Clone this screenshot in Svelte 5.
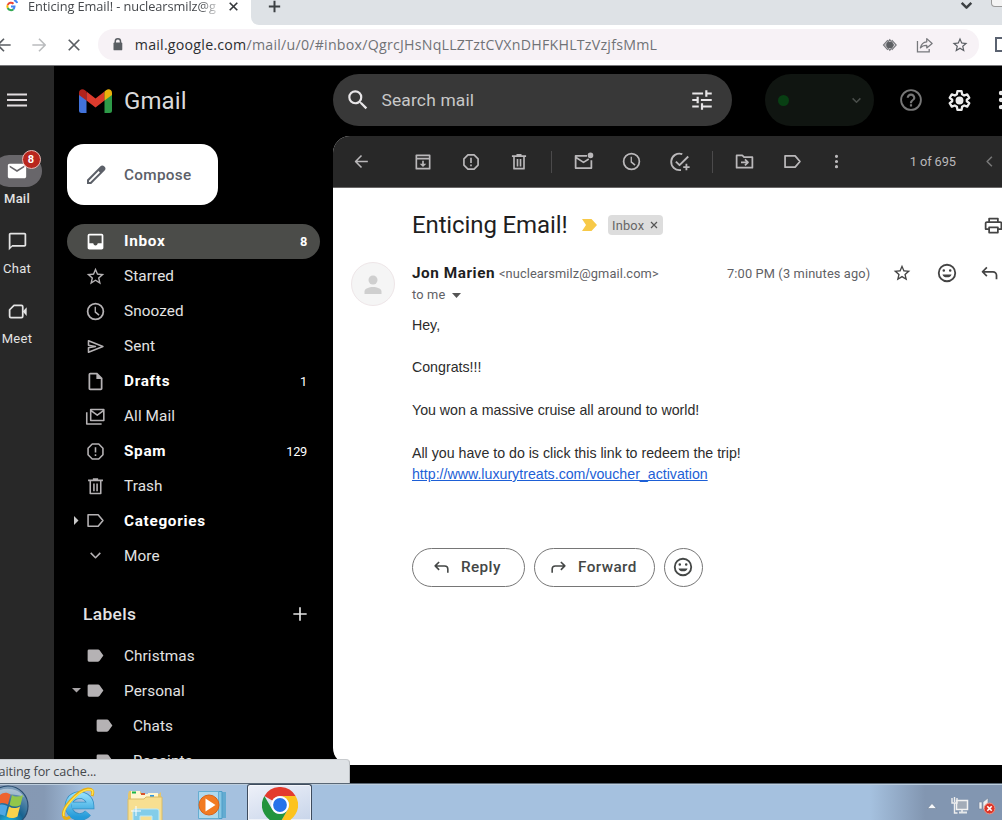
<script>
  const icons = {
    menu: { f: 'M2 18.5h20v-2H2zm0-5.5h20v-2H2zm0-7.500v2h20v-2z' },
    mail: { f: 'M20 4H4c-1.100 0-2 .9-2 2v12c0 1.100.9 2 2 2h16c1.100 0 2-.9 2-2V6c0-1.100-.9-2-2-2zm0 4l-8 5-8-5V6l8 5 8-5z' },
    chat: { f: 'M20 2H4c-1.100 0-2 .9-2 2v18l4-4h14c1.100 0 2-.9 2-2V4c0-1.100-.9-2-2-2zm0 14H6l-2 2V4h16z' },
    meet: { s: 'M8 5h8.500A1.500 1.500 0 0 1 18 6.500v11a1.500 1.500 0 0 1-1.500 1.500h-12A1.500 1.500 0 0 1 3 17.500V10z', f: 'M18 12l4.500-5v10z' },
    inbox: { f: 'M19 3H5a2 2 0 0 0-2 2v14c0 1.100.9 2 2 2h14c1.100 0 2-.9 2-2V5a2 2 0 0 0-2-2zm0 11h-4.500c0 1.400-1.100 2.500-2.500 2.500S9.500 15.400 9.500 14H5V5h14z' },
    star: { f: 'M22 9.240l-7.190-.62L12 2 9.190 8.630 2 9.240l5.460 4.730L5.820 21 12 17.270 18.180 21l-1.630-7.030zM12 15.400l-3.760 2.270 1-4.280-3.320-2.880 4.380-.38L12 6.100l1.710 4.040 4.380.38-3.320 2.880 1 4.280z' },
    clock: { f: 'M12 2a10 10 0 1 0 0 20 10 10 0 0 0 0-20zm0 18a8 8 0 1 1 0-16 8 8 0 0 1 0 16zm.5-13.500H11V13l4.500 3.800 1.100-1.300-4.100-3.400z' },
    send: { s: 'M4 5.500L20.500 12 4 18.500v-5L12 12l-8-1.500z' },
    draft: { f: 'M14 2H6a2 2 0 0 0-2 2v16c0 1.100.9 2 2 2h12c1.100 0 2-.9 2-2V8zM6 20V4h7v5h5v11z' },
    allmail: { s: 'M6.500 4h15v12.500h-15zM6.500 5l7.500 5.500L21.500 5M2 7v13.500h17' },
    report: { s: 'M8.300 3.500h7.400l4.800 4.800v7.400l-4.800 4.800H8.300l-4.800-4.800V8.300zM12 7v6.200M12 15v2.200' },
    trash: { s: 'M6 6v14h12V6M3.500 5h17M9 3.500h6M10.200 8.500v9M13.800 8.500v9' },
    label: { s: 'M3.500 5.500H15L20.500 12 15 18.500H3.500z' },
    labelFilled: { f: 'M4.500 5H15c.7 0 1.300.3 1.700.9L21 12l-4.300 6.100c-.4.6-1 .9-1.700.9H4.500A1.500 1.500 0 0 1 3 17.500v-11A1.500 1.500 0 0 1 4.500 5z' },
    down: { s: 'M6.500 9l5.500 5.500L17.500 9' },
    left: { s: 'M15 6l-6 6 6 6' },
    plus: { s: 'M12 4v16M4 12h16' },
    back: { s: 'M20 12H5M12 4.500L4.500 12l7.500 7.500' },
    fwd: { s: 'M4 12h15M12 4.500l7.500 7.500-7.500 7.500' },
    close: { s: 'M5 5l14 14M19 5L5 19' },
    archive: { s: 'M4 4h16v16H4zM4 8h16', f: 'M11 10.500h2V14h3l-4 4-4-4h3z' },
    unread: { s: 'M16 5.500H3v14h18V10.500M3.500 7.500L12 13l6-3.800', f: 'M20 1.800a3.200 3.200 0 1 0 0 6.400 3.200 3.200 0 0 0 0-6.400z' },
    task: { s: 'M14.500 3.400A9 9 0 1 0 13 20.700M7.500 11.500l4 4L21 6M19 14v7M15.500 17.500h7' },
    move: { s: 'M3 5h6.500l2 2H21v12H3zM8 13h7M12.500 9.500L16 13l-3.500 3.500' },
    more: { f: 'M12 3.500a2 2 0 1 0 0 4 2 2 0 0 0 0-4zm0 6.500a2 2 0 1 0 0 4 2 2 0 0 0 0-4zm0 6.500a2 2 0 1 0 0 4 2 2 0 0 0 0-4z' },
    print: { s: 'M7 8V4h10v4M6 16H3V9.500A1.500 1.500 0 0 1 4.500 8h15A1.500 1.500 0 0 1 21 9.500V16h-3M7 14h10v6H7z' },
    smile: { s: 'M12 3a9 9 0 1 0 0 18 9 9 0 0 0 0-18z', f: 'M8.500 7.800a1.400 1.400 0 1 0 0 2.800 1.400 1.400 0 0 0 0-2.800zm7 0a1.400 1.400 0 1 0 0 2.800 1.400 1.400 0 0 0 0-2.800zM7 13.500h10a5.200 4.500 0 0 1-10 0z' },
    reply: { s: 'M9 5l-5 5 5 5M4.500 10H16a4 4 0 0 1 4 4v4.500' },
    forward: { s: 'M15 5l5 5-5 5M19.500 10H8a4 4 0 0 0-4 4v4.500' },
    pencil: { f: 'M20.400 3.600a2.900 2.900 0 0 0-4.200 0L3 16.800V21h4.200L20.400 7.800a2.900 2.900 0 0 0 0-4.200zM6.300 19H5v-1.300L14.600 8.100l1.300 1.300z' },
    search: { f: 'M15.500 14h-.79l-.28-.27A6.471 6.471 0 0 0 16 9.500 6.500 6.500 0 1 0 9.500 16c1.610 0 3.090-.59 4.230-1.570l.27.28v.79l5 4.990L20.490 19zm-6 0a4.500 4.500 0 1 1 0-9 4.500 4.500 0 0 1 0 9z' },
    tune: { f: 'M3 17v2h6v-2H3zM3 5v2h10V5H3zm10 16v-2h8v-2h-8v-2h-2v6h2zM7 9v2H3v2h4v2h2V9H7zm14 4v-2H11v2h10zm-6-4h2V7h4V5h-4V3h-2v6z' },
    help: { f: 'M11 18h2v-2h-2zm1-16a10 10 0 1 0 0 20 10 10 0 0 0 0-20zm0 18.300a8.300 8.300 0 1 1 0-16.600 8.300 8.300 0 0 1 0 16.600zM12 6c-2.210 0-4 1.790-4 4h2c0-1.100.9-2 2-2s2 .9 2 2c0 2-3 1.750-3 5h2c0-2.250 3-2.500 3-5 0-2.210-1.790-4-4-4z' },
    gear: { s: 'M10 3h4l.5 3 2 1.200 2.900-1.100 2 3.400L19 11.300v1.400l2.400 1.800-2 3.400-2.900-1.100-2 1.200L14 21h-4l-.5-3-2-1.200-2.900 1.100-2-3.400L5 12.700v-1.400L2.600 9.500l2-3.400 2.900 1.100 2-1.200z', f: 'M12 8.200a3.800 3.800 0 1 0 0 7.600 3.800 3.800 0 0 0 0-7.600z' }
  };

  const folders = [
    { icon: 'inbox', name: 'Inbox', count: '8', bold: true, active: true },
    { icon: 'star', name: 'Starred' },
    { icon: 'clock', name: 'Snoozed' },
    { icon: 'send', name: 'Sent' },
    { icon: 'draft', name: 'Drafts', count: '1', bold: true },
    { icon: 'allmail', name: 'All Mail' },
    { icon: 'report', name: 'Spam', count: '129', bold: true },
    { icon: 'trash', name: 'Trash' },
    { icon: 'label', name: 'Categories', bold: true, caret: 'right' },
    { icon: 'down', name: 'More' }
  ];
  const labels = [
    { name: 'Christmas' },
    { name: 'Personal', caret: 'down' },
    { name: 'Chats', nested: true },
    { name: 'Receipts', nested: true }
  ];
  const apps = [
    { icon: 'mail', name: 'Mail', badge: '8' },
    { icon: 'chat', name: 'Chat' },
    { icon: 'meet', name: 'Meet' }
  ];
</script>

{#snippet icon(name, size = 22, w = 2)}
  <svg class="icon" width={size} height={size} viewBox="0 0 24 24" aria-hidden="true">
    {#if icons[name].s}
      <path d={icons[name].s} fill="none" stroke="currentColor" stroke-width={w} stroke-linejoin="round" />
    {/if}
    {#if icons[name].f}
      <path d={icons[name].f} fill="currentColor" fill-rule="evenodd" />
    {/if}
  </svg>
{/snippet}

{#snippet row(item)}
  <li class="row" class:active={item.active} class:bold={item.bold} class:nested={item.nested}>
    <span class="caret">
      {#if item.caret === 'right'}
        <svg width="5" height="9" viewBox="0 0 5 9"><path d="M0 0l4.500 4.500L0 9z" fill="#c8c8c8" /></svg>
      {:else if item.caret === 'down'}
        <svg width="9" height="5" viewBox="0 0 9 5"><path d="M0 0h9L4.500 4.500z" fill="#a8a4a6" /></svg>
      {/if}
    </span>
    <span class="row-icon">{@render icon(item.icon ?? 'labelFilled', 21, 1.8)}</span>
    <span class="row-name">{item.name}</span>
    <span class="count">{item.count ?? ''}</span>
  </li>
{/snippet}

<div class="screen">
  <div class="tabstrip">
    <div class="tab">
      <svg class="fav" width="13" height="13" viewBox="0 0 13 13" fill="none" stroke-width="2">
        <path d="M8.500 3.700A3.600 3.600 0 0 0 2.700 5" stroke="#ea4335" />
        <path d="M2.700 5a3.600 3.600 0 0 0 0 3" stroke="#fbbc05" />
        <path d="M2.700 8a3.600 3.600 0 0 0 5.700 1.200" stroke="#34a853" />
        <path d="M8.400 9.200A3.600 3.600 0 0 0 9.500 6.600H6M9 0a5 5 0 0 1 3.200 3" stroke="#4285f4" />
      </svg>
      <span class="tab-title">Enticing Email! - nuclearsmilz@g</span>
      <span class="tab-close">{@render icon('close', 13, 3)}</span>
    </div>
    <div class="strip">
      {@render icon('plus', 17, 2.800)}
      <span class="tab-search">{@render icon('down', 21, 2.800)}</span>
      <span class="window-btn"></span>
    </div>
  </div>

  <div class="urlbar">
    <span class="nav back">{@render icon('back', 20)}</span>
    <span class="nav next">{@render icon('fwd', 20)}</span>
    <span class="nav stop">{@render icon('close', 18, 2.300)}</span>
    <div class="omnibox">
      <svg width="10" height="13" viewBox="0 0 10 13"><path d="M2.300 5V3.300a2.700 2.700 0 0 1 5.400 0V5" fill="none" stroke="#5a5e63" stroke-width="1.500" /><rect x="0.500" y="4.500" width="9" height="8" rx="1" fill="#5a5e63" /></svg>
      <span class="url"><b>mail.google.com</b>/mail/u/0/#inbox/QgrcJHsNqLLZTztCVXnDHFKHLTzVzjfsMmL</span>
      <svg class="eye" width="16" height="14" viewBox="0 0 16 14"><path d="M6 2L1.500 7 6 12M10 2l4.500 5L10 12M8 1.500L4 7l4 5.500L12 7z" fill="none" stroke="#77787c" stroke-width="1.200" /><circle cx="8" cy="7" r="3.300" fill="#5c5e62" /></svg>
      <svg class="share" width="18" height="16" viewBox="0 0 18 16" fill="none" stroke="#77787c" stroke-width="1.300"><path d="M1.500 4v11h12v-3" /><path d="M4.500 11c.8-4 3-6 6.500-6.300V1.500L16.500 6.500 11 11V8.300c-3-.1-5 .7-6.500 2.700z" stroke-linejoin="round" /></svg>
      {@render icon('star', 18)}
    </div>
    <span class="ext"></span>
  </div>

  <div class="gmail">
    <nav class="rail">
      <span class="burger">{@render icon('menu', 24)}</span>
      {#each apps as app}
        <div class="app">
          <span class="app-icon" class:on={app.badge}>
            {@render icon(app.icon, app.badge ? 22 : 21)}
            {#if app.badge}<span class="badge">{app.badge}</span>{/if}
          </span>
          <span class="app-name">{app.name}</span>
        </div>
      {/each}
    </nav>

    <aside class="side">
      <div class="brand">
        <svg width="33" height="25" viewBox="0 0 33 25">
          <path d="M0 5h7.500v20H2.500A2.500 2.500 0 0 1 0 22.500z" fill="#4273db" />
          <path d="M25.500 5H33v17.500a2.500 2.500 0 0 1-2.500 2.500h-5z" fill="#2e9a48" />
          <path d="M7.500 3.500l9 7 9-7v9l-9 7-9-7z" fill="#dc3b2d" />
          <path d="M25.500 12.500V3.500l1.500-1.200C29.500.300 33 1.500 33 5v2z" fill="#eab20c" />
          <path d="M7.500 12.500V3.500L6 2.300C3.500.300 0 1.500 0 5v2z" fill="#b3231c" />
        </svg>
        <span>Gmail</span>
      </div>
      <button class="compose">{@render icon('pencil', 24)}<span>Compose</span></button>
      <ul>
        {#each folders as f}{@render row(f)}{/each}
      </ul>
      <div class="labels-head"><span>Labels</span>{@render icon('plus', 20, 2)}</div>
      <ul>
        {#each labels as l}{@render row(l)}{/each}
      </ul>
    </aside>

    <main>
      <header>
        <div class="search">
          {@render icon('search', 26)}
          <span>Search mail</span>
          {@render icon('tune', 26)}
        </div>
        <div class="status"><i></i>{@render icon('down', 17)}</div>
        <span class="help">{@render icon('help', 26)}</span>
        <span class="gear">{@render icon('gear', 25, 2.200)}</span>
        <span class="grid">{@render icon('more', 26)}</span>
      </header>

      <section class="card">
        <div class="actions">
          <span class="first">{@render icon('back', 19)}</span>
          <span>{@render icon('archive', 20)}</span>
          <span>{@render icon('report', 20)}</span>
          <span>{@render icon('trash', 20)}</span>
          <i></i>
          <span>{@render icon('unread', 21)}</span>
          <span>{@render icon('clock', 21)}</span>
          <span>{@render icon('task', 22)}</span>
          <i></i>
          <span>{@render icon('move', 21)}</span>
          <span>{@render icon('label', 21)}</span>
          <span class="dots">{@render icon('more', 19)}</span>
          <em>1 of 695</em>
          <span class="prev">{@render icon('left', 19)}</span>
        </div>

        <div class="subject">
          <h1>Enticing Email!</h1>
          <svg class="marker" width="15" height="12" viewBox="0 0 15 12"><path d="M0 0h9.500L15 6l-5.500 6H0l4-6z" fill="#f7c948" /></svg>
          <span class="chip">Inbox <svg width="8" height="8" viewBox="0 0 8 8"><path d="M1 1l6 6M7 1L1 7" stroke="#555" stroke-width="1.200" /></svg></span>
          <span class="print">{@render icon('print', 21)}</span>
        </div>

        <div class="message">
          <div class="avatar">
            <svg width="18" height="20" viewBox="0 0 18 20" fill="#cfcfcf"><circle cx="9" cy="5" r="4.500" /><path d="M.5 19v-2.500C.5 13.700 5 12 9 12s8.500 1.700 8.500 4.500V19z" /></svg>
          </div>
          <div class="content">
            <div class="from">
              <strong>Jon Marien</strong>
              <span class="addr">&lt;nuclearsmilz@gmail.com&gt;</span>
              <span class="time">7:00 PM (3 minutes ago)</span>
              <span class="act">{@render icon('star', 20)}</span>
              <span class="act">{@render icon('smile', 22)}</span>
              <span class="act">{@render icon('reply', 21)}</span>
            </div>
            <div class="to">to me <svg width="9" height="5" viewBox="0 0 9 5"><path d="M0 0h9L4.500 5z" fill="#555" /></svg></div>
            <div class="body">
              <p>Hey,</p>
              <p>Congrats!!!</p>
              <p>You won a massive cruise all around to world!</p>
              <p>All you have to do is click this link to redeem the trip!<br /><a href="#voucher">http://www.luxurytreats.com/voucher_activation</a></p>
            </div>
            <div class="buttons">
              <button class="r">{@render icon('reply', 19)}<span>Reply</span></button>
              <button class="f">{@render icon('forward', 19)}<span>Forward</span></button>
              <button class="e">{@render icon('smile', 22)}</button>
            </div>
          </div>
        </div>
      </section>
    </main>
  </div>

  <div class="bubble">Waiting for cache...</div>

  <footer>
    <svg class="start" width="42" height="37" viewBox="0 0 42 37">
      <defs>
        <radialGradient id="orb" cx="0.500" cy="0.950" r="0.900"><stop offset="0" stop-color="#20c4ee" /><stop offset="0.450" stop-color="#17628f" /><stop offset="1" stop-color="#7d9cb9" /></radialGradient>
      </defs>
      <circle cx="21" cy="22" r="20" fill="url(#orb)" stroke="#294d70" stroke-width="1.200" />
      <path d="M5 13C10 2 31 2 37 13c-8-3-22-4-32 0z" fill="#fff" opacity=".4" />
      <path d="M13 11c3.500-3 7-3 10.500-.5l-2.500 10c-3.500-2-7-2-10.500 0z" fill="#ef6430" />
      <path d="M25 11c3 2 7 2 11 0l-2.500 10c-4 2-7.500 2-11 0z" fill="#92c64a" />
      <path d="M10 22c3.500-2 7-2 10.500 0l-2.500 10c-3.500-2-7-2-10.500 0z" fill="#4fa8e4" />
      <path d="M22 22.500c3.500 2 7 2 11 0l-2.500 10c-4 2-7.500 2-11 0z" fill="#fbd24c" />
    </svg>
    <span class="task">
      <svg width="34" height="37" viewBox="0 0 34 37">
        <defs><linearGradient id="ie" x1="0" y1="0" x2="0" y2="1"><stop offset="0" stop-color="#8fdcfa" /><stop offset="1" stop-color="#249ad9" /></linearGradient></defs>
        <path d="M27 29A11 11 0 1 1 29.500 21.500H11" fill="none" stroke="#338fc4" stroke-width="7.500" />
        <path d="M27 29A11 11 0 1 1 29.500 21.500H11" fill="none" stroke="url(#ie)" stroke-width="6" />
        <path d="M31 12c2-5 0-7-4-7C17 6-1 25 3 33c1 2 3 2 6 0" fill="none" stroke="#e9ad10" stroke-width="3" />
        <path d="M31 11c2-5 0-5.500-4-5.500C17 7 0 25 3 32" fill="none" stroke="#ffe34d" stroke-width="1.500" />
      </svg>
    </span>
    <span class="task">
      <svg width="36" height="37" viewBox="0 0 36 37">
        <path d="M1 10l1-3h11l2 3h17l2-2v29H1z" fill="#e6c66b" />
        <path d="M4 7h9v3h8V9h10v7H4z" fill="#fff6d0" />
        <path d="M5 7.500h4v2H5z" fill="#18b54a" /><path d="M14 9h4v2h-4z" fill="#d9532b" /><path d="M23 11h4v2h-4z" fill="#2d98e6" />
        <path d="M1 15h16l2-2h16v24H1z" fill="#f7df91" stroke="#d9bc66" />
        <path d="M6 37V27a2 2 0 0 1 2-2h22a2 2 0 0 1 2 2v10h-7v-5H13v5z" fill="#83cde9" stroke="#bfeaf8" />
        <path d="M9 22v10M4 27h10" stroke="#fff" stroke-width="1" />
      </svg>
    </span>
    <span class="task">
      <svg width="30" height="37" viewBox="0 0 30 37">
        <path d="M7 8h22v26H7z" fill="#63abd1" /><path d="M4 7.500h21v27H4z" fill="#86c6e3" stroke="#4c9dc7" /><path d="M1.500 7.500h20v27h-20z" fill="#b0d9ed" stroke="#65add1" />
        <circle cx="12" cy="21" r="10" fill="#f27b22" stroke="#d8631b" />
        <path d="M8.500 14.500v13l10-6.500z" fill="#fff" />
      </svg>
    </span>
    <span class="task current">
      <svg width="36" height="36" viewBox="0 0 36 36">
        <path d="M2.400 9A18 18 0 0 1 33.600 9H18a9 9 0 0 0-7.800 4.500L18 18z" fill="#e33b2e" />
        <path d="M33.600 9A18 18 0 0 1 18 36l7.800-13.500A9 9 0 0 0 18 9z" fill="#fcc31e" />
        <path d="M18 36A18 18 0 0 1 2.400 9l7.800 13.500A9 9 0 0 0 25.800 22.500z" fill="#22943d" />
        <circle cx="18" cy="18" r="8.800" fill="#fff" /><circle cx="18" cy="18" r="6.900" fill="#2672ea" />
      </svg>
    </span>
    <div class="tray">
      <svg width="10" height="6" viewBox="0 0 10 6"><path d="M5 .5L9.500 5.500h-9z" fill="#f5f7fa" stroke="#6f7f95" stroke-width=".6" /></svg>
      <svg class="net" width="18" height="17" viewBox="0 0 18 17"><rect x="5.500" y="3.500" width="11" height="9" fill="#a3acb8" stroke="#f2f2f2" stroke-width="1.500" /><path d="M8 15.500h8M11 13v2" stroke="#e4e7ea" stroke-width="1.800" /><path d="M1 1v5h5V1M3.500 0v5M3.500 6v10h3" fill="none" stroke="#eee" stroke-width="1.400" /></svg>
      <svg class="vol" width="18" height="18" viewBox="0 0 18 18"><path d="M1 5h3v7H1zM5 5l5-4v15l-5-4z" fill="#eceef0" stroke="#76849a" stroke-width=".6" /><circle cx="11.500" cy="11.500" r="5.400" fill="#dc3528" stroke="#ef9083" /><path d="M9.300 9.300l4.400 4.400M13.700 9.300l-4.400 4.400" stroke="#fff" stroke-width="1.600" /></svg>
    </div>
  </footer>
</div>

<style>
  :global(body) { margin: 0; overflow: hidden; }
  * { box-sizing: border-box; }
  .icon { display: block; flex: none; }
  ul { list-style: none; margin: 0; padding: 0; }
  button { font: inherit; cursor: pointer; }

  .screen {
    position: relative;
    width: 1002px;
    height: 820px;
    overflow: hidden;
    display: flex;
    flex-direction: column;
    background: #000;
    font-family: Roboto, sans-serif;
  }

  .tabstrip { height: 25px; flex: none; display: flex; background: #fff; color: #3c4043; }
  .tab { width: 251px; flex: none; padding-left: 5px; display: flex; }
  .fav { flex: none; }
  .tab-title {
    width: 192px;
    flex: none;
    margin-left: 10px;
    height: 20px;
    white-space: nowrap;
    font: 12.8px/13px 'Open Sans', sans-serif;
    letter-spacing: -0.08px;
    color: #45484c;
    -webkit-mask-image: linear-gradient(90deg, #000 172px, transparent 194px);
    mask-image: linear-gradient(90deg, #000 172px, transparent 194px);
  }
  .tab-close { margin-left: 7px; color: #34373a; }
  .strip { flex: 1; display: flex; align-items: flex-start; padding-left: 15px; background: #dee2e6; border-bottom-left-radius: 8px; overflow: hidden; }
  .strip > .icon { margin-top: -2px; }
  .tab-search { margin: -5px 0 0 673px; }
  .window-btn { margin-left: 14px; width: 20px; height: 7px; flex: none; border: 1px solid #999; border-top: 0; border-bottom-left-radius: 4px; background: #f4f4f4; }

  .urlbar {
    height: 41px;
    flex: none;
    display: flex;
    align-items: center;
    background: #fff;
    border-bottom: 1px solid #77777a;
    color: #5a5e63;
    padding-bottom: 1px;
  }
  .nav.back { margin-left: -6px; }
  .nav.next { margin-left: 15px; color: #babcbe; }
  .nav.stop { margin-left: 16px; }
  .omnibox {
    width: 881px;
    height: 31px;
    flex: none;
    margin-left: 15px;
    border-radius: 16px;
    background: #f7f2f6;
    display: flex;
    align-items: center;
    padding: 0 10px 0 15px;
  }
  .url { margin-left: 12px; width: 524px; flex: none; white-space: nowrap; font: 14.2px/20px 'Open Sans', sans-serif; letter-spacing: 0.24px; color: #707276; }
  .url b { font-weight: 400; color: #2c2e31; }
  .eye { margin-left: 223px; }
  .share { margin: 0 17px 0 19px; }
  .ext { width: 20px; height: 15px; flex: none; margin-left: 16px; border: 2px solid #5a6270; }

  .gmail { flex: none; height: 717px; display: flex; overflow: hidden; color: #e3e3e3; }
  .rail { width: 54px; background: #282828; flex: none; }
  .burger { display: block; padding: 22px 0 0 5px; height: 89px; color: #e2dde0; }
  .app { height: 70px; width: 34px; display: flex; flex-direction: column; align-items: center; }
  .app-icon { position: relative; width: 49px; height: 32px; border-radius: 16px; display: flex; align-items: center; justify-content: center; }
  .app-icon.on { background: #68666a; color: #fff; }
  .badge {
    position: absolute;
    right: 1px;
    top: -5px;
    width: 19px;
    height: 19px;
    border: 1px solid #e8b8b4;
    border-radius: 50%;
    background: #b9261d;
    font: 700 11px/17px Roboto, sans-serif;
    text-align: center;
  }
  .app-name { font: 500 13px/24px Roboto, sans-serif; letter-spacing: 0.2px; }
  .app:nth-child(n + 3) .app-name { font-weight: 400; letter-spacing: 0.3px; }

  .side { width: 279.4px; flex: none; padding-left: 13px; }
  .brand { height: 78px; display: flex; align-items: flex-start; padding: 22px 0 0 12px; }
  .brand span { margin-left: 12px; font: 24px/26px Roboto, sans-serif; letter-spacing: 0.1px; color: #dadada; }
  .compose {
    display: flex;
    align-items: center;
    width: 151px;
    height: 61px;
    margin: 0 0 19px;
    padding: 0 0 0 17px;
    border: 0;
    border-radius: 17px;
    background: #fff;
    color: #5c6068;
    font: 500 15.3px/20px Roboto, sans-serif;
    letter-spacing: 0.3px;
  }
  .compose span { margin-left: 16px; }
  .row {
    width: 253px;
    height: 34.95px;
    display: flex;
    align-items: center;
    border-radius: 18px;
    font-size: 15.3px;
    letter-spacing: 0.1px;
    color: #e3e3e3;
  }
  .row.active { background: #4b4c49; color: #fff; }
  .row.bold { font-weight: 700; letter-spacing: 0.7px; color: #fff; }
  .row.nested { padding-left: 9px; }
  .caret { width: 18px; height: 9px; display: flex; align-items: center; justify-content: center; }
  .row-icon { width: 21px; color: #b5b2b4; }
  .row.active .row-icon { color: #fff; }
  .row-name { margin-left: 18px; flex: 1; }
  .count { margin-right: 13px; font-size: 12.8px; font-weight: 400; letter-spacing: -0.3px; }
  .row.active .count { font-weight: 700; }
  .labels-head {
    height: 56px;
    width: 253px;
    margin-top: 9px;
    padding: 9px 10px 0 16px;
    display: flex;
    justify-content: space-between;
    align-items: center;
    padding-bottom: 1px;
    font: 500 17.4px/20px Roboto, sans-serif;
    letter-spacing: 0.35px;
  }

  main { flex: 1; min-width: 0; display: flex; flex-direction: column; }
  header { height: 70px; flex: none; display: flex; align-items: center; padding-bottom: 2px; }
  .search {
    width: 399px;
    height: 52px;
    flex: none;
    border-radius: 26px;
    background: #383838;
    display: flex;
    align-items: center;
    padding: 0 17px 0 12px;
    color: #e8e6e8;
  }
  .search span { flex: 1; margin-left: 10px; font-size: 17.4px; letter-spacing: 0.18px; color: #c8c8c8; }
  .status { width: 109px; height: 52px; flex: none; margin-left: 33px; border-radius: 26px; background: #101511; display: flex; align-items: center; padding: 0 9px 0 13px; justify-content: space-between; color: #4a4e4b; }
  .status i { width: 11px; height: 11px; border-radius: 50%; background: #083f13; }
  .help { margin-left: 24px; color: #777; }
  .gear { margin-left: 23px; color: #ececec; }
  .grid { margin-left: 16px; color: #ececec; }

  .card { height: 629px; flex: none; background: #fff; border-radius: 17px 0 0 17px; overflow: hidden; color: #202124; }
  .actions { height: 52px; display: flex; align-items: center; background: #282828; border-bottom: 1px solid #6a6868; color: #bab8ba; }
  .actions span { width: 48.2px; flex: none; display: flex; justify-content: center; }
  .actions .first { margin: 0 13px 0 4px; }
  .actions i { width: 1px; height: 22px; margin: 0 7.7px; background: #4b4a4b; flex: none; }
  .actions .dots { width: 39px; }
  .actions em { width: 46px; flex: none; margin-left: 54px; font: 12.8px/20px Roboto, sans-serif; letter-spacing: -0.1px; white-space: nowrap; }
  .actions .prev { width: 20px; margin-left: 24px; color: #777; }

  .subject { height: 74px; display: flex; align-items: center; padding-left: 78.6px; }
  h1 { width: 155px; flex: none; margin: 0 15px 0 0; font: 400 24px/30px Roboto, sans-serif; letter-spacing: -0.12px; white-space: nowrap; color: #1f1f1f; }
  .marker { flex: none; }
  .chip { height: 20px; width: 55px; flex: none; margin-left: 11px; padding: 0 5px 0 4px; display: flex; align-items: center; justify-content: space-between; border-radius: 4px; background: #ddd; color: #666; font-size: 12.8px; letter-spacing: 0.2px; }
  .print { flex: none; margin-left: 320px; color: #444; }

  .message { display: flex; padding-left: 17.6px; }
  .avatar { width: 44px; height: 44px; flex: none; margin-right: 17px; border-radius: 50%; background: #f5f5f5; border: 1px solid #eee6e8; display: flex; align-items: center; justify-content: center; padding-top: 2px; }
  .content { flex: 1; min-width: 0; }
  .from { height: 22px; display: flex; align-items: center; color: #5f6165; font-size: 12.8px; white-space: nowrap; }
  .from > * { flex: none; }
  .from strong { width: 84px; font-size: 15.3px; letter-spacing: 0.55px; color: #1f1f1f; }
  .addr { width: 170px; margin-left: 3px; letter-spacing: 0.1px; }
  .time { width: 157px; margin-left: 58px; letter-spacing: 0.14px; }
  .act { width: 43.6px; display: flex; color: #444; }
  .act .icon { margin-left: 8px; }
  .to { height: 22px; font-size: 12.8px; line-height: 22px; letter-spacing: 0.2px; color: #5f6165; }
  .to svg { margin: 0 0 1px 3px; }
  .body { margin-top: 8.5px; font: 14.2px/21.35px 'Liberation Sans', Arial, sans-serif; color: #2c2c2c; }
  .body p { margin: 0 0 21.35px; }
  .body a { color: #1d5fd6; }
  .buttons { display: flex; gap: 9px; margin-top: 62.7px; }
  .buttons button { height: 39px; display: flex; align-items: center; border: 1px solid #767676; border-radius: 20px; background: #fff; color: #444746; padding: 0 0 0 19px; font: 500 15.3px/20px Roboto, sans-serif; letter-spacing: 0.4px; }
  .buttons span { margin-left: 10px; }
  .buttons .r { width: 113px; }
  .buttons .f { width: 121px; padding-left: 14px; }
  .buttons .e { width: 39px; padding: 0; justify-content: center; }

  .bubble {
    position: absolute;
    left: 0;
    top: 759px;
    width: 350px;
    height: 24px;
    background: #dee2e6;
    border-top: 1px solid #c8cbce;
    border-right: 1px solid #b8bcc0;
    border-top-right-radius: 4px;
    font: 12.6px/23px 'Open Sans', sans-serif;
    letter-spacing: -0.1px;
    color: #45484c;
    text-indent: -13px;
    overflow: hidden;
  }

  footer {
    height: 37px;
    flex: none;
    display: flex;
    border-top: 1px solid #596775;
    box-shadow: inset 0 1px #bccddd;
    background: linear-gradient(90deg, #8598b3 0, #8599b4 44px, #a5c1df 84px, #a5c1df 870px, #8296b1 925px, #8296b1 100%);
  }
  .start { margin-left: -13px; flex: none; }
  .task { width: 67px; flex: none; display: flex; justify-content: center; }
  .start + .task { margin-left: 15px; }
  .task.current { width: 65px; margin-left: 2px; background: linear-gradient(160deg, #eef1f9, #c8d5ea); border: 1px solid #3e4c5e; border-bottom: 0; border-radius: 3px 3px 0 0; box-shadow: inset 0 0 0 1px #fff9; padding-top: 2px; }
  .tray { margin-left: auto; display: flex; align-items: center; padding: 7px 6px 0 0; }
  .net { margin-left: 14px; }
  .vol { margin-left: 9px; }
</style>
